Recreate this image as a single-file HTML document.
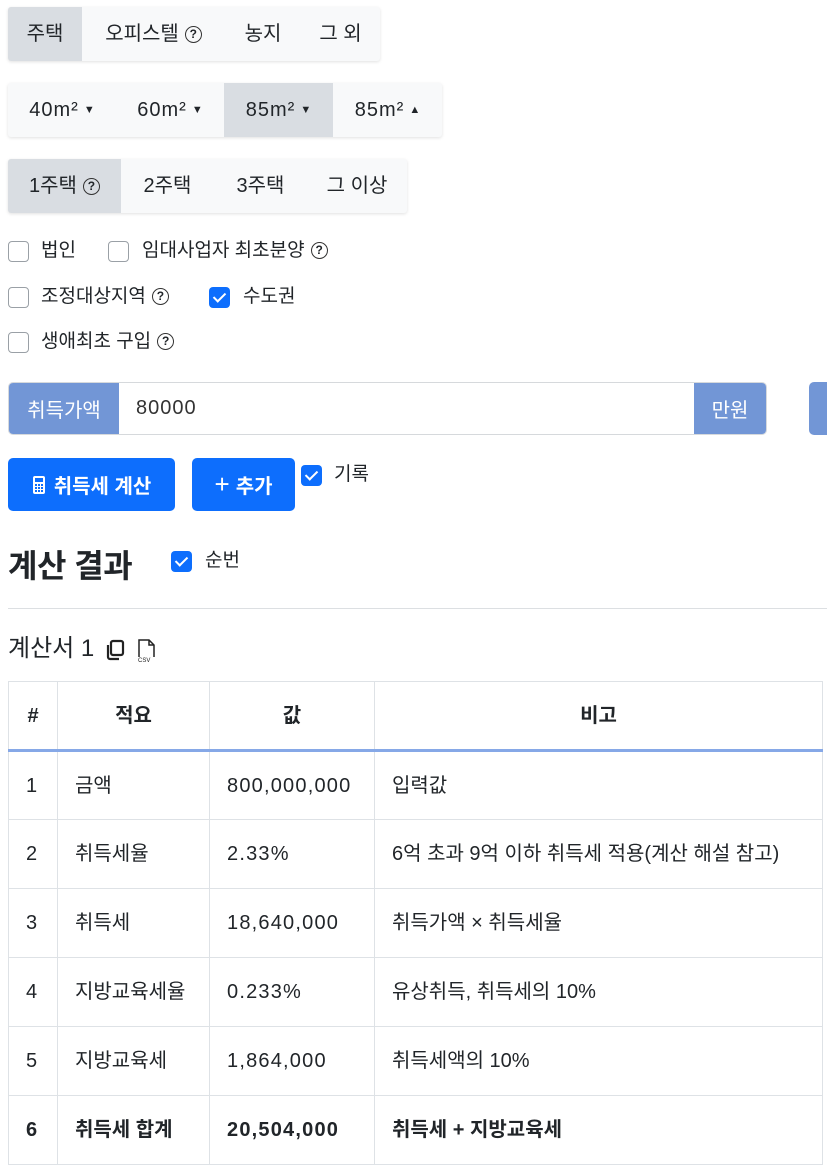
<!DOCTYPE html>
<html><head><meta charset="utf-8"><style>
*{box-sizing:border-box;margin:0;padding:0}
body{width:827px;height:1170px;background:#fff;font-family:"Liberation Sans","Noto Sans CJK KR",sans-serif;color:#212529;position:relative;overflow:hidden;font-size:20px}
.a{position:absolute}
.grp{position:absolute;display:flex;background:#f8f9fa;box-shadow:0 1px 3px rgba(0,0,0,.12);border-radius:3px;overflow:hidden;font-size:20px;line-height:24px}
.grp div{display:flex;align-items:center;justify-content:center;height:100%}
.sel{background:#d9dde2}
.q{display:inline-block;width:17px;height:17px;border:1.5px solid #333;border-radius:50%;font-size:12px;line-height:14px;text-align:center;margin-left:6px;font-weight:bold;vertical-align:middle}
.cb{position:absolute;width:21px;height:21px;border:1.5px solid #9aa0a6;border-radius:4px;background:#fff}
.cbon{position:absolute;width:21px;height:21px;border-radius:4px;background:#0d6efd}
.cbon::after{content:"";position:absolute;left:7px;top:3px;width:5px;height:10px;border:solid #fff;border-width:0 2.5px 2.5px 0;transform:rotate(45deg)}
.lbl{position:absolute;font-size:19px;line-height:22px}
table{position:absolute;left:8px;top:681px;width:815px;border-collapse:collapse;font-size:20px}
td,th{border:1.5px solid #dee2e6;height:69px;padding:0 17px;text-align:left;line-height:24px;vertical-align:middle}
td:nth-child(3){letter-spacing:1.2px}
th{text-align:center;font-weight:bold;border-bottom:3px solid #86a8e7}
tr.b td{font-weight:bold}
.n{letter-spacing:1px}
</style></head><body>

<div class="grp" style="left:8px;top:7px;width:372px;height:54px">
<div class="sel" style="width:74px">주택</div>
<div style="width:143px">오피스텔<span class="q">?</span></div>
<div style="width:76px">농지</div>
<div style="width:79px">그 외</div>
</div>

<div class="grp" style="left:8px;top:83px;width:434px;height:54px">
<div style="width:108px"><span class="n">40m²</span><span style="font-size:11px;margin-left:5px">▼</span></div>
<div style="width:108px"><span class="n">60m²</span><span style="font-size:11px;margin-left:5px">▼</span></div>
<div class="sel" style="width:109px"><span class="n">85m²</span><span style="font-size:11px;margin-left:5px">▼</span></div>
<div style="width:109px"><span class="n">85m²</span><span style="font-size:11px;margin-left:5px">▲</span></div>
</div>

<div class="grp" style="left:8px;top:159px;width:399px;height:54px">
<div class="sel" style="width:113px">1주택<span class="q">?</span></div>
<div style="width:93px">2주택</div>
<div style="width:93px">3주택</div>
<div style="width:100px">그 이상</div>
</div>

<div class="cb" style="left:8px;top:241px"></div><div class="lbl" style="left:41px;top:240px">법인</div>
<div class="cb" style="left:108px;top:241px"></div><div class="lbl" style="left:142px;top:240px">임대사업자 최초분양<span class="q">?</span></div>
<div class="cb" style="left:8px;top:287px"></div><div class="lbl" style="left:41px;top:286px">조정대상지역<span class="q">?</span></div>
<div class="cbon" style="left:209px;top:287px"></div><div class="lbl" style="left:243px;top:286px">수도권</div>
<div class="cb" style="left:8px;top:332px"></div><div class="lbl" style="left:41px;top:331px">생애최초 구입<span class="q">?</span></div>

<div class="a" style="left:8px;top:382px;width:759px;height:53px;border:1.5px solid #d6d9dc;border-radius:5px;overflow:hidden;display:flex">
<div style="width:110px;background:#7296d6;color:#fff;display:flex;align-items:center;justify-content:center">취득가액</div>
<div style="flex:1;display:flex;align-items:center;padding-left:17px;color:#333;letter-spacing:1px">80000</div>
<div style="width:72px;background:#7296d6;color:#fff;display:flex;align-items:center;justify-content:center">만원</div>
</div>
<div class="a" style="left:809px;top:382px;width:30px;height:53px;background:#7296d6;border-radius:5px"></div>

<div class="a" style="left:8px;top:458px;width:167px;height:53px;background:#0d6efd;border-radius:5px;color:#fff;display:flex;align-items:center;justify-content:center;font-weight:bold">
<svg width="14" height="20" viewBox="0 0 14 20" style="margin-right:8px"><rect x="1" y="1" width="12" height="18" rx="2" fill="#fff"/><rect x="3" y="3" width="8" height="4" fill="#0d6efd"/><g fill="#0d6efd"><rect x="3" y="9" width="2" height="2"/><rect x="6" y="9" width="2" height="2"/><rect x="9" y="9" width="2" height="2"/><rect x="3" y="12" width="2" height="2"/><rect x="6" y="12" width="2" height="2"/><rect x="9" y="12" width="2" height="2"/><rect x="3" y="15" width="2" height="2"/><rect x="6" y="15" width="2" height="2"/><rect x="9" y="15" width="2" height="2"/></g></svg>취득세 계산</div>
<div class="a" style="left:192px;top:458px;width:103px;height:53px;background:#0d6efd;border-radius:5px;color:#fff;display:flex;align-items:center;justify-content:center;font-weight:bold"><span style="font-size:26px;font-weight:normal;margin-right:6px">+</span>추가</div>
<div class="cbon" style="left:301px;top:465px"></div><div class="lbl" style="left:334px;top:464px">기록</div>

<div class="a" style="left:8px;top:541px;font-size:32px;font-weight:bold;letter-spacing:-0.5px">계산 결과</div>
<div class="cbon" style="left:171px;top:551px"></div><div class="lbl" style="left:205px;top:550px">순번</div>
<div class="a" style="left:8px;top:608px;width:819px;height:1px;background:#dcdfe2"></div>

<div class="a" style="left:8px;top:634px;font-size:24px;line-height:30px">계산서 1</div>
<svg class="a" style="left:103px;top:638px" width="24" height="24" viewBox="0 0 24 24" fill="none" stroke="#222" stroke-width="2.2"><rect x="8" y="3" width="12" height="14" rx="2"/><path d="M5 7v12a2 2 0 0 0 2 2h9"/></svg>
<svg class="a" style="left:135px;top:637px" width="24" height="26" viewBox="0 0 24 26" fill="none" stroke="#222" stroke-width="1.5"><path d="M4 20V3h10l5 5v12"/><path d="M14 3v5h5"/><text x="3" y="25" font-size="6" fill="#222" stroke="none" font-family="Liberation Sans">CSV</text></svg>

<table>
<tr><th style="width:49px;padding:0">#</th><th style="width:152px">적요</th><th style="width:165px">값</th><th>비고</th></tr>
<tr><td>1</td><td>금액</td><td>800,000,000</td><td>입력값</td></tr>
<tr><td>2</td><td>취득세율</td><td>2.33%</td><td>6억 초과 9억 이하 취득세 적용(계산 해설 참고)</td></tr>
<tr><td>3</td><td>취득세</td><td>18,640,000</td><td>취득가액 × 취득세율</td></tr>
<tr><td>4</td><td>지방교육세율</td><td>0.233%</td><td>유상취득, 취득세의 10%</td></tr>
<tr><td>5</td><td>지방교육세</td><td>1,864,000</td><td>취득세액의 10%</td></tr>
<tr class="b"><td>6</td><td>취득세 합계</td><td>20,504,000</td><td>취득세 + 지방교육세</td></tr>
</table>
</body></html>
